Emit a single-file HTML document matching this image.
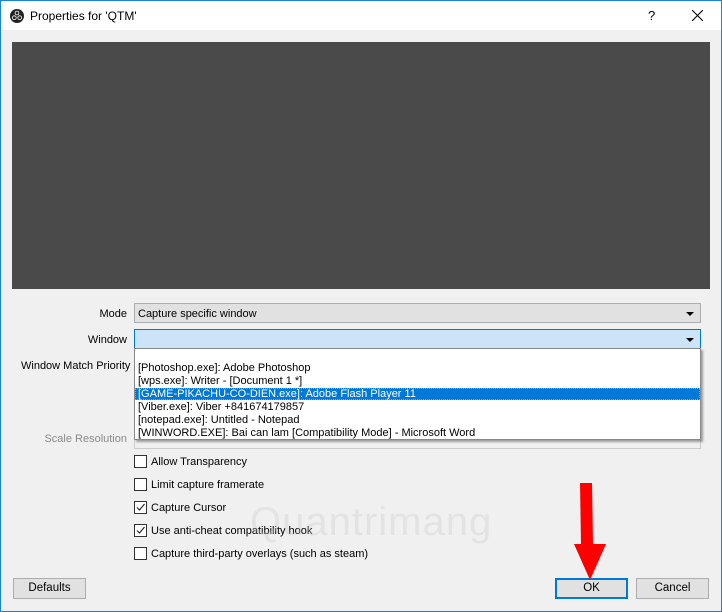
<!DOCTYPE html>
<html><head><style>
*{margin:0;padding:0;box-sizing:border-box}
body{width:722px;height:612px;background:#f0f0f0;font-family:"Liberation Sans",sans-serif;font-size:11px;color:#000;position:relative;overflow:hidden}
.abs{position:absolute}
.frame{left:0;top:0;width:722px;height:612px;border:1px solid #1883d7;}
.title{left:1px;top:1px;width:720px;height:29px;background:#fff}
.lbl{text-align:right;width:127px;left:0}
.combo{border:1px solid #adadad;background:#e1e1e1;height:20px;padding:4px 3px}
.arrow{position:absolute;right:6px;top:8px;width:0;height:0;border-left:4px solid transparent;border-right:4px solid transparent;border-top:4px solid #000}
.cb{width:13px;height:13px;border:1px solid #333;background:#fff}
.cbl{left:151px}
.btn{border:1px solid #adadad;background:#e1e1e1;height:21px;text-align:center;line-height:19px;font-size:11.5px}
.item{left:138px;height:13px;line-height:13px;white-space:nowrap}
</style></head><body>
<div class="abs frame"></div>
<div class="abs title"></div>
<svg class="abs" style="left:10px;top:9px" width="14" height="14" viewBox="0 0 14 14"><circle cx="7" cy="7" r="7" fill="#222"/><circle cx="7" cy="4" r="2.3" fill="#fff"/><circle cx="4.3" cy="8.7" r="2.3" fill="#fff"/><circle cx="9.7" cy="8.7" r="2.3" fill="#fff"/><circle cx="7" cy="4" r="1.5" fill="#222"/><circle cx="4.3" cy="8.7" r="1.5" fill="#222"/><circle cx="9.7" cy="8.7" r="1.5" fill="#222"/></svg>
<div class="abs" style="left:30px;top:9px;font-size:12px">Properties for 'QTM'</div>
<div class="abs" style="left:648px;top:8px;font-size:13px">?</div>
<svg class="abs" style="left:692px;top:10px" width="11" height="11"><path d="M0 0L11 11M11 0L0 11" stroke="#000" stroke-width="1.1"/></svg>
<div class="abs" style="left:12px;top:42px;width:698px;height:247px;background:#4a4a4a"></div>

<div class="abs lbl" style="top:308px">Mode</div>
<div class="abs combo" style="left:134px;top:303px;width:567px">Capture specific window<span class="arrow"></span></div>
<div class="abs lbl" style="top:334px">Window</div>
<div class="abs combo" style="left:134px;top:329px;width:567px;background:#cce4f7;border-color:#0078d7"><span class="arrow"></span></div>
<div class="abs" style="left:21px;top:360px">Window Match Priority</div>
<div class="abs lbl" style="top:433px;color:#8a8a8a">Scale Resolution</div>
<div class="abs" style="left:134px;top:429px;width:567px;height:20px;border:1px solid #ccc;background:#f0f0f0"></div>

<div class="abs" style="left:134px;top:348px;width:567px;height:92px;background:#fff;border:1px solid #888;box-shadow:2px 2px 2px rgba(0,0,0,.35)"></div>
<div class="abs" style="left:135px;top:388px;width:565px;height:12px;background:#0078d7;border:1px dotted #f09020"></div>
<div class="abs item" style="top:362px">[Photoshop.exe]: Adobe Photoshop</div>
<div class="abs item" style="top:375px">[wps.exe]: Writer - [Document 1 *]</div>
<div class="abs item" style="top:388px;color:#fff">[GAME-PIKACHU-CO-DIEN.exe]: Adobe Flash Player 11</div>
<div class="abs item" style="top:401px">[Viber.exe]: Viber +841674179857</div>
<div class="abs item" style="top:414px">[notepad.exe]: Untitled - Notepad</div>
<div class="abs item" style="top:427px">[WINWORD.EXE]: Bai can lam [Compatibility Mode] - Microsoft Word</div>

<div class="abs cb" style="left:134px;top:455px"></div><div class="abs cbl" style="top:456px">Allow Transparency</div>
<div class="abs cb" style="left:134px;top:478px"></div><div class="abs cbl" style="top:479px">Limit capture framerate</div>
<div class="abs cb" style="left:134px;top:501px"><svg width="11" height="11" style="position:absolute;left:0;top:0"><path d="M2 5.5L4.5 8L9.5 2" stroke="#222" fill="none" stroke-width="1.1"/></svg></div><div class="abs cbl" style="top:502px">Capture Cursor</div>
<div class="abs cb" style="left:134px;top:524px"><svg width="11" height="11" style="position:absolute;left:0;top:0"><path d="M2 5.5L4.5 8L9.5 2" stroke="#222" fill="none" stroke-width="1.1"/></svg></div><div class="abs cbl" style="top:525px">Use anti-cheat compatibility hook</div>
<div class="abs cb" style="left:134px;top:547px"></div><div class="abs cbl" style="top:548px">Capture third-party overlays (such as steam)</div>

<div class="abs" style="left:250px;top:500px;font-size:40px;color:rgba(200,200,200,.3);letter-spacing:1px">Quantrimang</div>

<div class="abs btn" style="left:13px;top:578px;width:73px">Defaults</div>
<div class="abs btn" style="left:555px;top:578px;width:73px;border:2px solid #0078d7;line-height:17px">OK</div>
<div class="abs btn" style="left:636px;top:578px;width:73px">Cancel</div>
<svg class="abs" style="left:568px;top:482px" width="46" height="100"><path d="M12 1L24 1L25 62L38 62L22 98L6 62L13 62Z" fill="#f00"/></svg>
</body></html>
